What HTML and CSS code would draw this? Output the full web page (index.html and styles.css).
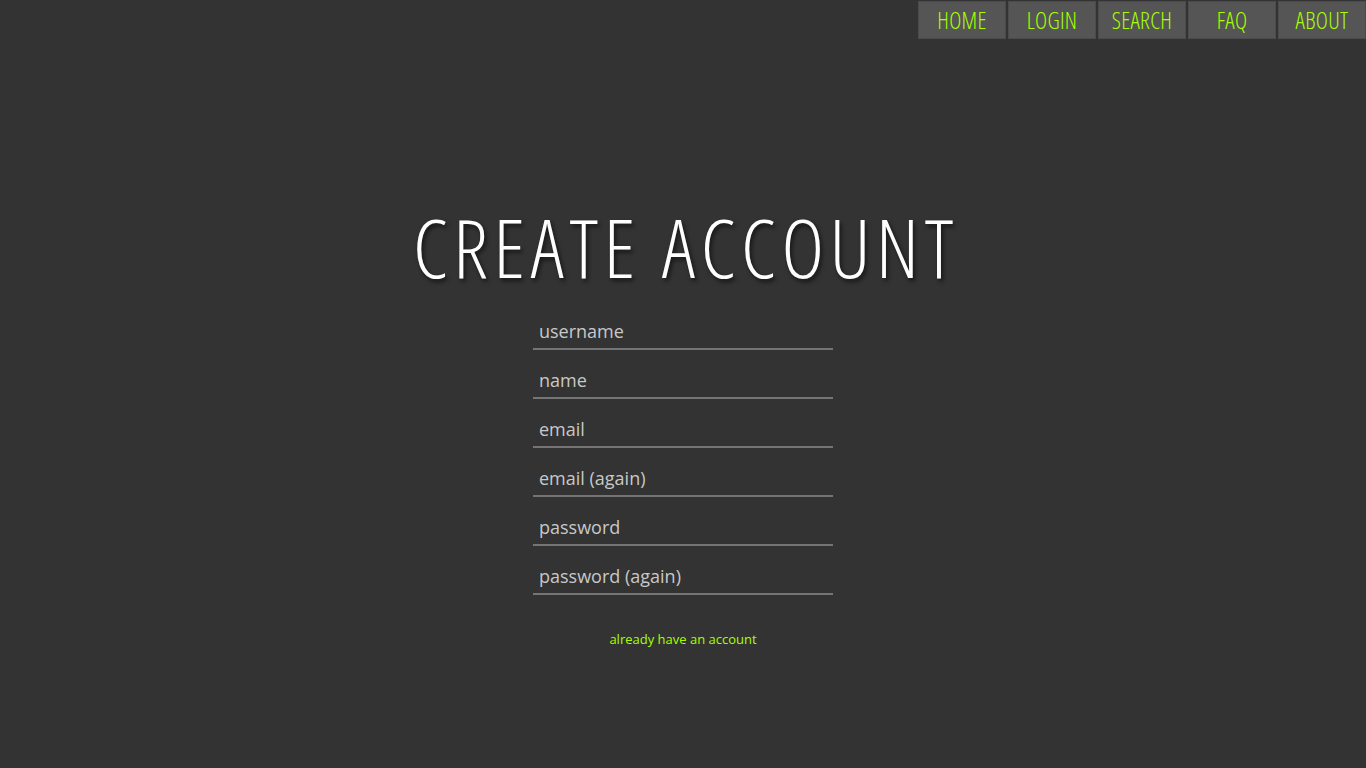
FILE: index.html
```html
<!DOCTYPE html>
<html lang="en">
<head>
<meta charset="utf-8">
<title>Create Account</title>
<link rel="stylesheet" href="styles.css">
</head>
<body>
<nav class="topnav">
  <a class="nav-btn" href="#">HOME</a>
  <a class="nav-btn" href="#">LOGIN</a>
  <a class="nav-btn" href="#">SEARCH</a>
  <a class="nav-btn" href="#">FAQ</a>
  <a class="nav-btn" href="#">ABOUT</a>
</nav>
<main class="page">
  <h1 class="title">CREATE ACCOUNT</h1>
  <form class="signup">
    <input class="field" type="text" placeholder="username">
    <input class="field" type="text" placeholder="name">
    <input class="field" type="email" placeholder="email">
    <input class="field" type="email" placeholder="email (again)">
    <input class="field" type="password" placeholder="password">
    <input class="field" type="password" placeholder="password (again)">
  </form>
  <a class="small-link" href="#">already have an account</a>
</main>
</body>
</html>
```
FILE: styles.css
```css
html, body {
  margin: 0;
  padding: 0;
  background: #333333;
  height: 100%;
}
body {
  font-family: "Open Sans", "Noto Sans", sans-serif;
}
.topnav {
  display: flex;
  justify-content: flex-end;
  gap: 2px;
  padding-top: 1px;
}
.nav-btn {
  width: 88px;
  height: 38px;
  box-sizing: border-box;
  background: #555555;
  border: 1px solid #4b4b4b;
  color: #a6ff00;
  text-decoration: none;
  display: flex;
  align-items: center;
  justify-content: center;
  font-family: "Open Sans", sans-serif;
  font-stretch: 75%;
  font-weight: 300;
  font-size: 23px;
  letter-spacing: 0.3px;
}
.page {
  display: flex;
  flex-direction: column;
  align-items: center;
}
.title {
  margin: 158px 0 0 0;
  padding-left: 6px;
  font-family: "Open Sans", sans-serif;
  font-stretch: 75%;
  font-weight: 300;
  font-size: 81px;
  line-height: 100px;
  letter-spacing: 5.8px;
  color: #ffffff;
  text-shadow: 2px 3px 4px rgba(0,0,0,0.6);
}
.signup {
  display: flex;
  flex-direction: column;
  gap: 9px;
  margin-top: 13px;
  width: 300px;
}
.field {
  height: 40px;
  box-sizing: border-box;
  background: transparent;
  border: none;
  border-bottom: 2px solid #747474;
  padding: 4px 6px 0 6px;
  font-family: "Open Sans", "Noto Sans", sans-serif;
  font-size: 18px;
  color: #d0d0d0;
  outline: none;
}
.field::placeholder {
  color: #c8c8c8;
}
.small-link {
  margin-top: 35px;
  color: #a6ff00;
  text-decoration: none;
  font-family: "Open Sans", sans-serif;
  font-stretch: 88%;
  font-size: 13px;
}
```
